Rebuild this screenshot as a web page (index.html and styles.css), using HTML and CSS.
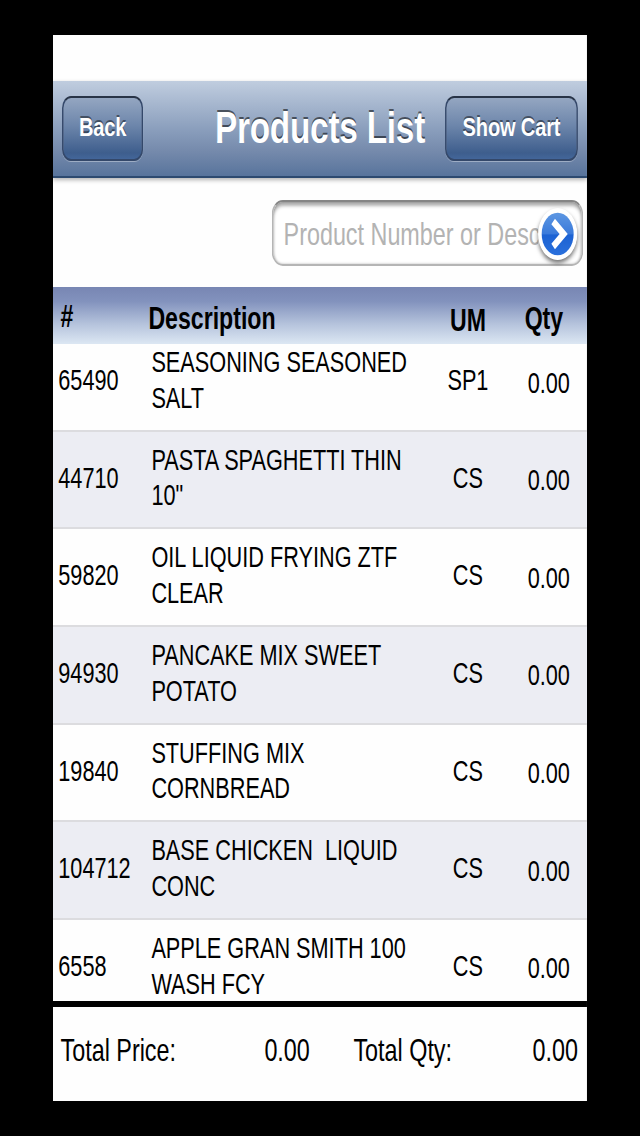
FILE: index.html
```
<!DOCTYPE html>
<html lang="en">
<head>
<meta charset="UTF-8" />
<meta name="viewport" content="width=device-width, initial-scale=1" />
<title>Products List</title>
<link rel="stylesheet" href="styles.css">
</head>
<body>

<div class="device">
<div class="screen">
  <header class="navbar">
    <button class="nav-btn back" type="button">Back</button>
    <h1>Products List</h1>
    <button class="nav-btn cart" type="button">Show Cart</button>
  </header>

  <form class="search">
    <div class="field">
      <input type="text" placeholder="Product Number or Description" />
      <button class="go" type="button" aria-label="Search">
        <svg viewBox="0 0 52 52" width="52" height="52">
          <defs>
            <linearGradient id="ball" x1="0" y1="0" x2="0" y2="1">
              <stop offset="0" stop-color="#5d97e2" />
              <stop offset="0.5" stop-color="#3a7adb" />
              <stop offset="0.52" stop-color="#1c62d3" />
              <stop offset="1" stop-color="#2a70dc" />
            </linearGradient>
          </defs>
          <circle cx="26" cy="26" r="25.5" fill="#fff" />
          <circle cx="26" cy="26" r="21.3" fill="url(#ball)" />
          <path d="M20 13.5 L34 26 L20 38.5" fill="none" stroke="#fff" stroke-width="7.2" />
        </svg>
      </button>
    </div>
  </form>

  <div class="row head">
    <span class="num">#</span>
    <span class="desc">Description</span>
    <span class="um">UM</span>
    <span class="qty">Qty</span>
  </div>

  <div class="list">
    <div class="row item">
      <span class="num">65490</span>
      <span class="desc">SEASONING SEASONED SALT</span>
      <span class="um">SP1</span>
      <span class="qty">0.00</span>
    </div>
    <div class="row item">
      <span class="num">44710</span>
      <span class="desc">PASTA SPAGHETTI THIN 10"</span>
      <span class="um">CS</span>
      <span class="qty">0.00</span>
    </div>
    <div class="row item">
      <span class="num">59820</span>
      <span class="desc">OIL LIQUID FRYING ZTF CLEAR</span>
      <span class="um">CS</span>
      <span class="qty">0.00</span>
    </div>
    <div class="row item">
      <span class="num">94930</span>
      <span class="desc">PANCAKE MIX SWEET POTATO</span>
      <span class="um">CS</span>
      <span class="qty">0.00</span>
    </div>
    <div class="row item">
      <span class="num">19840</span>
      <span class="desc">STUFFING MIX CORNBREAD</span>
      <span class="um">CS</span>
      <span class="qty">0.00</span>
    </div>
    <div class="row item">
      <span class="num">104712</span>
      <span class="desc">BASE CHICKEN &nbsp;LIQUID CONC</span>
      <span class="um">CS</span>
      <span class="qty">0.00</span>
    </div>
    <div class="row item">
      <span class="num">6558</span>
      <span class="desc">APPLE GRAN SMITH 100 WASH FCY</span>
      <span class="um">CS</span>
      <span class="qty">0.00</span>
    </div>
  </div>

  <footer class="totals">
    <span>Total Price:</span>
    <span class="value">0.00</span>
    <span class="qty-label">Total Qty:</span>
    <span class="value">0.00</span>
  </footer>
</div>
</div>

</body>
</html>
```
FILE: styles.css
```
* {
  box-sizing: border-box;
}
body {
  margin: 0;
  padding: 35px 0 0 53px;
  height: 1136px;
  background: #000;
  overflow: hidden;
  font-family: "Liberation Sans", Arial, sans-serif;
  color: #000;
}
.device {
  width: 534px;
  height: 1066px;
  overflow: hidden;
}
/* the 2:3 screen is squeezed sideways to fit the taller display */
.screen {
  width: 711px;
  height: 1066px;
  padding-top: 46px;
  background: #fefefe;
  transform: scaleX(0.751);
  transform-origin: 0 0;
  display: flex;
  flex-direction: column;
}
.navbar {
  height: 97px;
  padding: 0 12px 1px;
  display: grid;
  grid-template-columns: 1fr auto 1fr;
  align-items: center;
  background: linear-gradient(#c0cddf, #8b9fbd 50%, #7489ab 75%, #58749c);
  border-bottom: 2px solid #2d4a70;
  box-shadow: 0 2px 5px rgba(0, 0, 0, 0.3);
}
h1 {
  margin: 0;
  font-size: 44.4px;
  line-height: 64px;
  letter-spacing: -0.3px;
  color: #fff;
  text-shadow: 0 -2px 0 rgba(0, 0, 0, 0.55);
}
.nav-btn {
  height: 65px;
  padding: 0 0 1px;
  border: 2px solid #34486a;
  border-top-color: #283447;
  border-radius: 12px;
  background: linear-gradient(#94a6c1, #6d86ab 45%, #3e5e8d 90%, #43669a);
  box-shadow: 0 1px 0 rgba(255, 255, 255, 0.35);
  font-family: inherit;
  font-size: 26.7px;
  font-weight: bold;
  letter-spacing: -0.2px;
  color: #fff;
  text-shadow: 0 -2px 0 rgba(0, 0, 0, 0.45);
}
.back {
  width: 108px;
}
.cart {
  width: 177px;
  justify-self: end;
}
.search {
  height: 109px;
  padding: 22px 5px 0 0;
  display: flex;
  justify-content: flex-end;
  align-items: flex-start;
}
.field {
  width: 415px;
  height: 66px;
  padding: 2px 6px 0 14px;
  display: flex;
  align-items: center;
  border: 2px solid #b5b5b5;
  border-top-color: #858585;
  border-radius: 15px;
  background: #fff;
  box-shadow: inset 0 4px 4px rgba(0, 0, 0, 0.3), inset 0 0 3px rgba(0, 0, 0, 0.3);
}
.field input {
  flex: 1;
  min-width: 0;
  height: 46px;
  padding: 1px 0 0;
  border: 0;
  background: none;
  font-family: inherit;
  font-size: 31.1px;
}
.field input::placeholder {
  color: #b3b3b3;
}
.go {
  width: 52px;
  height: 52px;
  padding: 0;
  border: 0;
  border-radius: 50%;
  background: none;
  box-shadow: 0 3px 5px rgba(0, 0, 0, 0.55);
}
.go svg {
  display: block;
}
.row {
  display: grid;
  grid-template-columns: 131px 359px 125px 96px;
  font-size: 28.9px;
  line-height: 35.6px;
}
.head {
  height: 57px;
  flex-shrink: 0;
  padding-top: 14px;
  background: linear-gradient(#7886b3, #8292bd 25%, #b5c3dc 65%, #dce7f3);
  font-size: 30.8px;
  font-weight: bold;
}
.head .num {
  padding: 0 0 0 10px;
  margin-top: -2px;
}
.head .desc {
  margin-left: -4px;
}
.head .um {
  margin-top: 2px;
}
.head .qty {
  padding-left: 13px;
}
.list {
  height: 657px;
  overflow: hidden;
}
.item {
  height: 97.65px;
  padding-top: 11px;
  border-bottom: 2px solid #dcdcdf;
}
/* scrolled a little, the first row tucks under the header */
.item:first-child {
  margin-top: -9.8px;
}
.item:nth-child(even) {
  background: #ecedf3;
}
.num {
  padding-left: 7px;
}
.item .num,
.item .um {
  margin-top: 18px;
}
.desc {
  padding-right: 10px;
}
.um {
  text-align: center;
}
.qty {
  padding-left: 17px;
}
.item .qty {
  margin-top: 20.3px;
}
.totals {
  flex: 1;
  padding: 0 12px 6px 10px;
  border-top: 6px solid #000;
  display: grid;
  grid-template-columns: 239px 93px 1fr auto;
  align-items: center;
  font-size: 31.1px;
}
.totals .value {
  text-align: right;
}
.qty-label {
  padding-left: 58px;
}
```
